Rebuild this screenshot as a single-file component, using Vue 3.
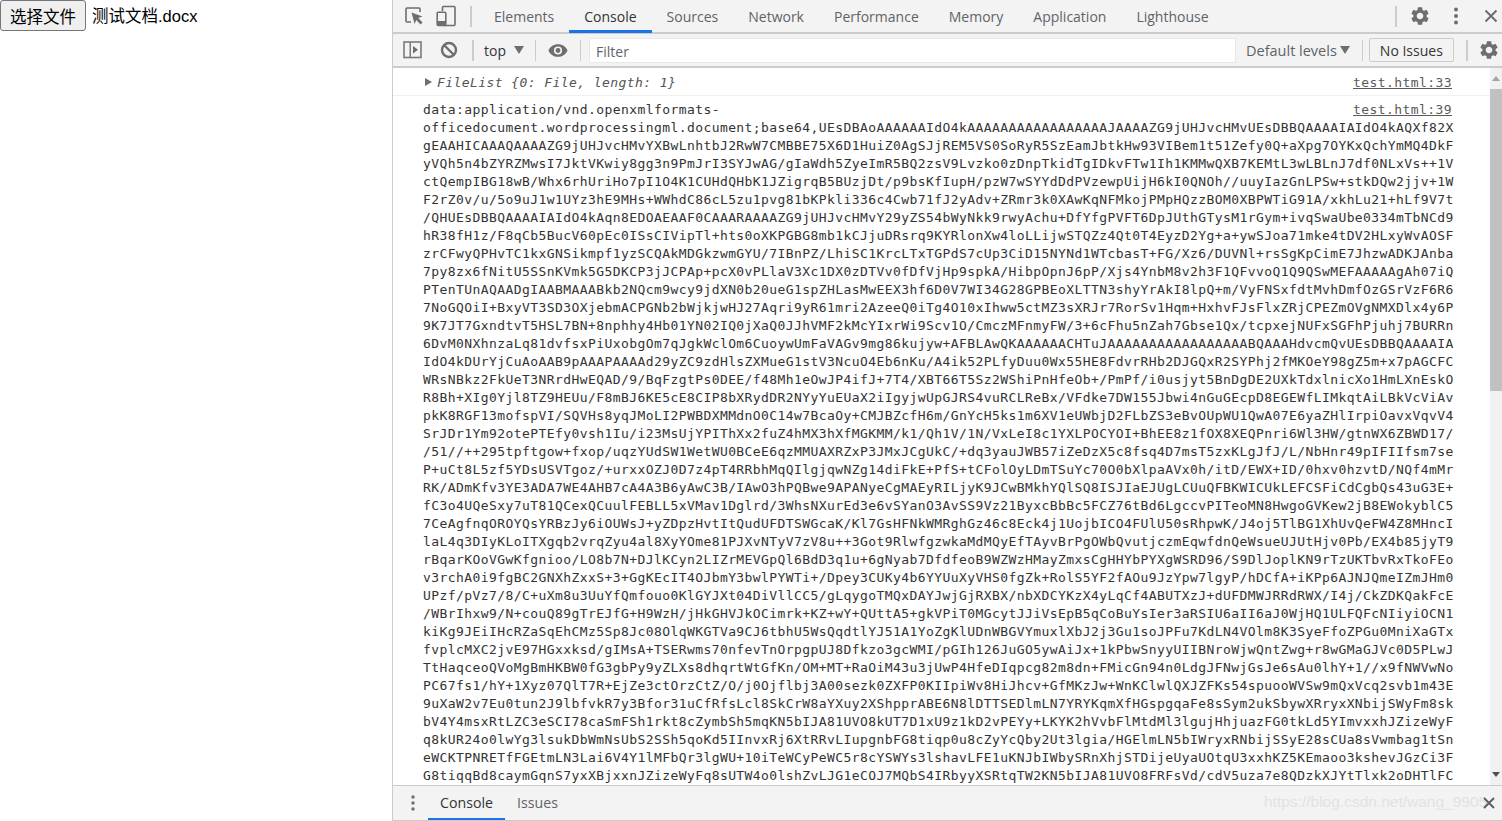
<script setup>
const gear = 'M19.14 12.94c.04-.3.06-.61.06-.94 0-.32-.02-.64-.07-.94l2.03-1.58c.18-.14.23-.41.12-.61l-1.92-3.32c-.12-.22-.37-.29-.59-.22l-2.39.96c-.5-.38-1.03-.7-1.62-.94l-.36-2.54c-.04-.24-.24-.41-.48-.41h-3.84c-.24 0-.43.17-.47.41l-.36 2.54c-.59.24-1.13.57-1.62.94l-2.39-.96c-.22-.08-.47 0-.59.22L2.74 8.87c-.12.21-.08.47.12.61l2.03 1.58c-.05.3-.09.63-.09.94s.02.64.07.94l-2.03 1.58c-.18.14-.23.41-.12.61l1.92 3.32c.12.22.37.29.59.22l2.39-.96c.5.38 1.03.7 1.62.94l.36 2.54c.05.24.24.41.48.41h3.84c.24 0 .44-.17.47-.41l.36-2.54c.59-.24 1.13-.56 1.62-.94l2.39.96c.22.08.47 0 .59-.22l1.92-3.32c.12-.22.07-.47-.12-.61l-2.01-1.58zM12 15.6c-1.98 0-3.6-1.62-3.6-3.6s1.62-3.6 3.6-3.6 3.6 1.62 3.6 3.6-1.62 3.6-3.6 3.6z'
const tabs = ['Elements', 'Console', 'Sources', 'Network', 'Performance', 'Memory', 'Application', 'Lighthouse']
const lines = [
  'data:application/vnd.openxmlformats-',
  'officedocument.wordprocessingml.document;base64,UEsDBAoAAAAAAIdO4kAAAAAAAAAAAAAAAAAJAAAAZG9jUHJvcHMvUEsDBBQAAAAIAIdO4kAQXf82X',
  'gEAAHICAAAQAAAAZG9jUHJvcHMvYXBwLnhtbJ2RwW7CMBBE75X6D1HuiZ0AgSJjREM5VS0SoRyR5SzEamJbtkHw93VIBem1t51Zefy0Q+aXpg7OYKxQchYmMQ4DkF',
  'yVQh5n4bZYRZMwsI7JktVKwiy8gg3n9PmJrI3SYJwAG/gIaWdh5ZyeImR5BQ2zsV9Lvzko0zDnpTkidTgIDkvFTw1Ih1KMMwQXB7KEMtL3wLBLnJ7df0NLxVs++1V',
  'ctQempIBG18wB/Whx6rhUriHo7pI1O4K1CUHdQHbK1JZigrqB5BUzjDt/p9bsKfIupH/pzW7wSYYdDdPVzewpUijH6kI0QNOh//uuyIazGnLPSw+stkDQw2jjv+1W',
  'F2rZ0v/u/5o9uJ1w1UYz3hE9MHs+WWhdC86cL5zu1pvg81bKPkli336c4Cwb71fJ2yAdv+ZRmr3k0XAwKqNFMkojPMpHQzzBOM0XBPWTiG91A/xkhLu21+hLf9V7t',
  '/QHUEsDBBQAAAAIAIdO4kAqn8EDOAEAAF0CAAARAAAAZG9jUHJvcHMvY29yZS54bWyNkk9rwyAchu+DfYfgPVFT6DpJUthGTysM1rGym+ivqSwaUbe0334mTbNCd9',
  'hR38fH1z/F8qCb5BucV60pEc0ISsCIVipTl+hts0oXKPGBG8mb1kCJjuDRsrq9KYRlonXw4loLLijwSTQZz4Qt0T4EyzD2Yg+a+ywSJoa71mke4tDV2HLxyWvAOSF',
  'zrCFwyQPHvTC1kxGNSikmpf1yzSCQAkMDGkzwmGYU/7IBnPZ/LhiSC1KrcLTxTGPdS7cUp3CiD15NYNd1WTcbasT+FG/Xz6/DUVNl+rsSgKpCimE7JhzwADKJAnba',
  '7py8zx6fNitU5SSnKVmk5G5DKCP3jJCPAp+pcX0vPLlaV3Xc1DX0zDTVv0fDfVjHp9spkA/HibpOpnJ6pP/Xjs4YnbM8v2h3F1QFvvoQ1Q9QSwMEFAAAAAgAh07iQ',
  'PTenTUnAQAADgIAABMAAABkb2NQcm9wcy9jdXN0b20ueG1spZHLasMwEEX3hf6D0V7WI34G28GPBEoXLTTN3shyYrAkI8lpQ+m/VyFNSxfdtMvhDmfOzGSrVzF6R6',
  '7NoGQOiI+BxyVT3SD3OXjebmACPGNb2bWjkjwHJ27Aqri9yR61mri2AzeeQ0iTg4O10xIhww5ctMZ3sXRJr7RorSv1Hqm+HxhvFJsFlxZRjCPEZmOVgNMXDlx4y6P',
  '9K7JT7GxndtvT5HSL7BN+8nphhy4Hb01YN02IQ0jXaQ0JJhVMF2kMcYIxrWi9Scv1O/CmczMFnmyFW/3+6cFhu5nZah7Gbse1Qx/tcpxejNUFxSGFhPjuhj7BURRn',
  '6DvM0NXhnzaLq81dvfsxPiUxobgOm7qJgkWclOm6CuoywUmFaVAGv9mg86kujyw+AFBLAwQKAAAAAACHTuJAAAAAAAAAAAAAAAAABQAAAHdvcmQvUEsDBBQAAAAIA',
  'IdO4kDUrYjCuAoAAB9pAAAPAAAAd29yZC9zdHlsZXMueG1stV3NcuO4Eb6nKu/A4ik52PLfyDuu0Wx55HE8FdvrRHb2DJGQxR2SYPhj2fMKOeY98gZ5m+x7pAGCFC',
  'WRsNBkz2FkUeT3NRrdHwEQAD/9/BqFzgtPs0DEE/f48Mh1eOwJP4ifJ+7T4/XBT66T5Sz2WShiPnHfeOb+/PmPf/i0usjyt5BnDgDE2UXkTdxlnicXo1HmLXnEskO',
  'R8Bh+XIg0Yjl8TZ9HEUu/F8mBJ6KE5cE8CIP8bXRydDR2NYyYuEUaX2iIgyjwUpGJRS4vuRCLReBx/VFdke7DW155Jbwi4nGuGEcpD8EGEWfLIMkqtAiLBkVcViAv',
  'pkK8RGF13mofspVI/SQVHs8yqJMoLI2PWBDXMMdnO0C14w7BcaOy+CMJBZcfH6m/GnYcH5ks1m6XV1eUWbjD2FLbZS3eBvOUpWU1QwA07E6yaZHlIrpiOavxVqvV4',
  'SrJDr1Ym92otePTEfy0vsh1Iu/i23MsUjYPIThXx2fuZ4hMX3hXfMGKMM/k1/Qh1V/1N/VxLeI8c1YXLPOCYOI+BhEE8z1fOX8XEQPnri6Wl3HW/gtnWX6ZBWD17/',
  '/51//++295tpftgow+fxop/uqzYUdSW1WetWU0BCeE6qzMMUAXRZxP3JMxJCgUkC/+dq3yauJWB57iZeDzX5c8fsq4D7msT5zxKLgJfJ/L/NbHnr49pIFIIfsm7se',
  'P+uCt8L5zf5YDsUSVTgoz/+urxxOZJ0D7z4pT4RRbhMqQIlgjqwNZg14diFkE+PfS+tCFolOyLDmTSuYc70O0bXlpaAVx0h/itD/EWX+ID/0hxv0hzvtD/NQf4mMr',
  'RK/ADmKfv3YE3ADA7WE4AHB7cA4A3B6yAwC3B/IAwO3hPQBwe9APANyeCgMAEyRILjyK9JCwBMkhYQlSQ8ISJIaEJUgLCUuQFBKWICUkLEFCSFiCdCgbQs43uG3E+',
  'fC3o4UQeSxy7uT81QCexQCuulFEBLL5xVMav1Dglrd/3WhsNXurEd3e6vSYanO3AvSS9Vz21ByxcBbBc5FCZ76tBd6LgccvPITeoMN8HwgoGVKew2jB8EWokyblC5',
  '7CeAgfnqOROYQsYRBzJy6iOUWsJ+yZDpzHvtItQudUFDTSWGcaK/Kl7GsHFNkWMRghGz46c8Eck4j1UojbICO4FUlU50sRhpwK/J4oj5TlBG1XhUvQeFW4Z8MHncI',
  'laL4q3DIyKLoITXgqb2vrqZyu4al8XyYOme81PJXvNTyV7zV8u++3Got9RlwfgzwkaMdMQyEfTAyvBrPgOWbQvutjczmEqwfdnQeWsueUJUtHjv0Pb/EX4b85jyT9',
  'rBqarKOoVGwKfgnioo/LO8b7N+DJlKCyn2LIZrMEVGpQl6BdD3q1u+6gNyab7DfdfeoB9WZWzHMayZmxsCgHHYbPYXgWSRD96/S9DlJoplKN9rTzUKTbvRxTkoFEo',
  'v3rchA0i9fgBC2GNXhZxxS+3+GgKEcIT4OJbmY3bwlPYWTi+/Dpey3CUKy4b6YYUuXyVHS0fgZk+RolS5YF2fAOu9JzYpw7lgyP/hDCfA+iKPp6AJNJQmeIZmJHm0',
  'UPzf/pVz7/8/C+uXm8u3UuYfQmfouo0KlGYJXt04DiVllCC5/gLqygoTMQxDAYJwjGjRXBX/nbXDCYKzX4yLqCf4ABUTXzJ+dUFDMWJRRdRWX/I4j/CkZDKQakFcE',
  '/WBrIhxw9/N+couQ89gTrEJfG+H9WzH/jHkGHVJkOCimrk+KZ+wY+QUttA5+gkVPiT0MGcytJJiVsEpB5qCoBuYsIer3aRSIU6aII6aJ0WjHQ1ULFQFcNIiyiOCN1',
  'kiKg9JEiIHcRZaSqEhCMz5Sp8Jc08OlqWKGTVa9CJ6tbhU5WsQqdtlYJ51A1YoZgKlUDnWBGVYmuxlXbJ2j3Gu1soJPFu7KdLN4VOlm8K3SyeFfoZPGu0MniXaGTx',
  'fvplcMXC2jvE97HGxxksd/gIMsA+TSERwms70nfevTnOrpgpUJ8Dfkzo3gcWMI/pGIh126JuGO5ywAiJx+1kPbwSnyyUIIBNroWjwQntZwg+r8wGMaGJVc0D5PLwJ',
  'TtHaqceoQVoMgBmHKBW0fG3gbPy9yZLXs8dhqrtWtGfKn/OM+MT+RaOiM43u3jUwP4HfeDIqpcg82m8dn+FMicGn94n0LdgJFNwjGsJe6sAu0lhY+1//x9fNWVwNo',
  'PC67fs1/hY+1Xyz07QlT7R+EjZe3ctOrzCtZ/O/j0Ojflbj3A00sezk0ZXFP0KIIpiWv8HiJhcv+GfMKzJw+WnKClwlQXJZFKs54spuooWVSw9mQxVcq2svb1m43E',
  '9uXaW2v7Eu0tun2J9lbfvkR7y3Bfor31uCfRfsLcl8SkCrW8aYXuy2XShpprABE6N8lDTTSEDlmLN7YRYKqmXfHGspgqaFe8sSym2ukSbywXRryxXNbijSWyFm8sk',
  'bV4Y4msxRtLZC3eSCI78caSmFSh1rkt8cZymbSh5mqKN5bIJA81UVO8kUT7D1xU9z1kD2vPEYy+LKYK2hVvbFlMtdMl3lgujHhjuazFG0tkLd5YImvxxhJZizeWyF',
  'q8kUR24o0lwYg3lsukDbWmNsUbS2SSh5qoKd5IInvxRj6XtRRvLIupgnbFG8tiqp0u8cZyYcQby2Ut3lgia/HGElmLN5bIWryxRNbijSSyE28sCUa8sVwmbag1tSn',
  'eWCKTPNRETfFGEtmLN3Lai6V4Y1lMFbQr3lgWU+10iTeWCyPeWC5r8cYSWYs3lshavLFE1uKNJbIWbySRnXhjSTDijeUyaUOtqU3xxhKZ5KEmaoo3kshevJGzCi3F',
  'G8tiqqBd8caymGqnS7yxXBjxxnJZizeWyFq8sUTW4o0lshZvLJG1eCOJ7MQbS4IRbyyXSRtqTW2KN5bIJA81UVO8FRFsVd/cdV5uza7e8QDzkXJYtTlxk2oDHTlFC'
]
</script>

<template>
  <div class="page">
    <div class="site">
      <button class="pick">选择文件</button>
      <span class="fname">测试文档.docx</span>
    </div>
    <div class="devtools">
      <div class="bar top">
        <svg class="ic first" width="22" height="22" viewBox="0 0 22 22">
          <path d="M8 17H4a1 1 0 0 1-1-1V4a1 1 0 0 1 1-1h12a1 1 0 0 1 1 1v3" fill="none" stroke="#6e6e6e" stroke-width="1.6"/>
          <path d="M8.5 7.5l11 4-4.2 1.6 4.2 4.3-2 2-4.2-4.3L11.600 19z" fill="#6e6e6e"/>
        </svg>
        <svg class="ic" width="22" height="22" viewBox="0 0 22 22">
          <path d="M7.500 6V2.500a1 1 0 0 1 1-1H19a1 1 0 0 1 1 1V19.500a1 1 0 0 1-1 1H9" fill="none" stroke="#6e6e6e" stroke-width="1.600"/>
          <rect x="2.200" y="7.200" width="8.600" height="13.300" rx="1" fill="none" stroke="#6e6e6e" stroke-width="1.600"/>
          <rect x="3" y="16" width="7" height="4" fill="#6e6e6e"/>
        </svg>
        <span class="sep tall"></span>
        <span v-for="(t, i) in tabs" :key="t" class="tab" :class="{ on: i === 1 }">{{ t }}</span>
        <span class="grow"></span>
        <span class="sep tall"></span>
        <svg class="gear g1" width="22" height="22" viewBox="0 0 24 24"><path :d="gear" fill="#6e6e6e"/></svg>
        <svg class="kebab" width="4" height="18" viewBox="0 0 4 18"><circle cx="2" cy="2.500" r="2" fill="#6e6e6e"/><circle cx="2" cy="9" r="2" fill="#6e6e6e"/><circle cx="2" cy="15.500" r="2" fill="#6e6e6e"/></svg>
        <svg class="close" width="14" height="14" viewBox="0 0 14 14"><path d="M1.500 1.500l11 11M12.500 1.500l-11 11" stroke="#6e6e6e" stroke-width="2"/></svg>
      </div>
      <div class="bar second">
        <svg class="dock" width="20" height="18" viewBox="0 0 20 18">
          <rect x="1" y="1" width="17" height="15.500" fill="none" stroke="#7a7a7a" stroke-width="1.600"/>
          <rect x="6.500" y="1" width="1.500" height="15.500" fill="#7a7a7a"/>
          <path d="M10 5l5 3.800-5 3.800z" fill="#6e6e6e"/>
        </svg>
        <svg class="block" width="18" height="18" viewBox="0 0 18 18">
          <circle cx="9" cy="9" r="7" fill="none" stroke="#6e6e6e" stroke-width="2.400"/>
          <path d="M4 4l10 10" stroke="#6e6e6e" stroke-width="2.400"/>
        </svg>
        <span class="sep tall s1"></span>
        <span class="ctx">top</span>
        <span class="tri t1"></span>
        <span class="sep mid s2"></span>
        <svg class="eye" width="20" height="13" viewBox="0 0 22 14">
          <path d="M11 0C6 0 2 3 0.500 7 2 11 6 14 11 14s9-3 10.500-7C20 3 16 0 11 0zm0 11.500a4.500 4.500 0 1 1 0-9 4.500 4.500 0 0 1 0 9zM11 4.300a2.700 2.700 0 1 0 0 5.400 2.700 2.700 0 0 0 0-5.400z" fill="#6e6e6e"/>
        </svg>
        <span class="sep mid s3"></span>
        <div class="filter">Filter</div>
        <span class="levels">Default levels</span>
        <span class="tri t2"></span>
        <span class="sep mid s4"></span>
        <span class="issues">No Issues</span>
        <span class="sep tall s5"></span>
        <svg class="gear g2" width="22" height="22" viewBox="0 0 24 24"><path :d="gear" fill="#6e6e6e"/></svg>
      </div>
      <div class="body">
        <div class="log">
          <div class="row first-row">
            <span class="caret"></span>
            <span class="obj">FileList {0: File, length: 1}</span>
            <span class="src">test.html:33</span>
          </div>
          <div class="row data-row">
            <span class="src src2">test.html:39</span>
            <div v-for="(l, i) in lines" :key="i" class="ln">{{ l }}</div>
          </div>
        </div>
        <div class="scroll">
          <span class="arrow up"></span>
          <span class="thumb"></span>
          <span class="grow"></span>
          <span class="arrow down"></span>
        </div>
      </div>
      <div class="drawer">
        <svg class="dkebab" width="4" height="16" viewBox="0 0 4 16"><circle cx="2" cy="2" r="1.700" fill="#6e6e6e"/><circle cx="2" cy="8" r="1.700" fill="#6e6e6e"/><circle cx="2" cy="14" r="1.700" fill="#6e6e6e"/></svg>
        <span class="dtab on">Console</span>
        <span class="dtab">Issues</span>
        <span class="grow"></span>
        <span class="mark">https://blog.csdn.net/wang_9905</span>
        <svg class="dclose" width="12" height="12" viewBox="0 0 12 12"><path d="M1 1l10 10M11 1L1 11" stroke="#5f5f5f" stroke-width="2"/></svg>
      </div>
    </div>
  </div>
</template>

<style scoped>
.page { display: flex; width: 1502px; height: 821px; background: #fff; overflow: hidden; font-family: "Open Sans", "Noto Sans", sans-serif; }
.site { width: 392px; flex: none; display: flex; align-items: flex-start; font-family: "Liberation Sans", "Noto Sans CJK SC", sans-serif; font-size: 16.500px; color: #000; }
.pick { width: 86px; height: 31px; margin: 0; padding: 0; background: #efefef; border: 1px solid #767676; border-radius: 3px; font: inherit; color: #000; }
.fname { margin-left: 6px; line-height: 32px; }
.devtools { flex: 1; min-width: 0; display: flex; flex-direction: column; border-left: 1px solid #ccc; height: 820px; border-bottom: 1px solid #ccc; box-sizing: content-box; position: relative; }
.bar { display: flex; align-items: center; background: #f3f3f3; border-bottom: 2px solid #ccc; flex: none; }
.top { height: 32px; }
.second { height: 32px; }
.ic { flex: none; }
.first { margin-left: 10px; margin-right: 10px; }
.sep { flex: none; width: 2px; background: #ccc; }
.tall { height: 21px; }
.mid { height: 21px; width: 1px; }
.top .sep:first-of-type { margin-left: 13px; }
.tab { position: relative; height: 32px; line-height: 34px; padding: 0 15px; font-size: 14px; color: #5f6368; flex: none; }
.tab.on { color: #333; }
.tab.on::after { content: ""; position: absolute; left: 0; right: 0; bottom: -1px; height: 3px; background: #1a73e8; }
.top .sep:first-of-type + .tab { margin-left: 7px; }
.grow { flex: 1; }
.g1 { margin-left: 12px; }
.kebab { margin-left: 23px; }
.close { margin-left: 26px; margin-right: 4px; }
.dock { margin-left: 10px; }
.block { margin-left: 17px; }
.s1 { margin-left: 14px; }
.ctx { margin-left: 10px; font-size: 14px; color: #333; }
.tri { width: 0; height: 0; border-left: 5px solid transparent; border-right: 5px solid transparent; border-top: 8px solid #6e6e6e; flex: none; }
.t1 { margin-left: 8px; }
.s2 { margin-left: 11px; }
.eye { margin-left: 12px; flex: none; }
.s3 { margin-left: 12px; }
.filter { margin-left: 8px; width: 647px; height: 25px; line-height: 25px; background: #fff; border: 1px solid #e8e8e8; padding-left: 6px; box-sizing: border-box; font-size: 14px; color: #5f6368; flex: none; }
.levels { margin-left: 10px; font-size: 14.500px; color: #5f6368; flex: none; }
.t2 { margin-left: 3px; }
.s4 { margin-left: 12px; }
.issues { margin-left: 6px; width: 85px; height: 24px; line-height: 23px; text-align: center; box-sizing: border-box; border: 1px solid #ccc; border-radius: 2px; font-size: 14px; color: #333; flex: none; }
.s5 { margin-left: 12px; }
.g2 { margin-left: 10px; }
.body { flex: 1; min-height: 0; display: flex; overflow: hidden; }
.log { flex: 1; min-width: 0; overflow: hidden; background: #fff; }
.row { position: relative; padding-right: 38px; }
.first-row { display: flex; align-items: center; height: 28px; border-bottom: 1px solid #f0f0f0; font-family: "DejaVu Sans Mono", monospace; font-size: 13px; letter-spacing: 0.420px; padding-top: 1px; box-sizing: border-box; }
.caret { margin-left: 32px; width: 0; height: 0; border-top: 4.500px solid transparent; border-bottom: 4.500px solid transparent; border-left: 7px solid #6e6e6e; flex: none; }
.obj { margin-left: 5px; font-style: italic; color: #555; }
.src { margin-left: auto; color: #5a5a5a; text-decoration: underline; font-family: "DejaVu Sans Mono", monospace; font-size: 13px; letter-spacing: 0.420px; }
.data-row { padding-top: 5px; padding-left: 30px; }
.src2 { float: right; line-height: 18px; }
.ln { font-family: "DejaVu Sans Mono", monospace; font-size: 13px; letter-spacing: 0.420px; line-height: 18px; height: 18px; white-space: pre; color: #333; }
.scroll { width: 12px; flex: none; background: #f1f1f1; display: flex; flex-direction: column; align-items: center; }
.arrow { width: 0; height: 0; border-left: 4px solid transparent; border-right: 4px solid transparent; flex: none; }
.up { margin-top: 8px; border-bottom: 5px solid #a3a3a3; }
.down { margin-bottom: 8px; border-top: 5px solid #505050; }
.thumb { width: 12px; height: 302px; background: #c1c1c1; margin-top: 8px; flex: none; }
.drawer { position: relative; height: 34px; flex: none; display: flex; align-items: center; background: #f3f3f3; border-top: 1px solid #ccc; }
.dkebab { margin-left: 18px; flex: none; }
.dtab { position: relative; padding: 0 12px; line-height: 34px; font-size: 14.200px; color: #5f6368; flex: none; }
.dtab.on { margin-left: 13px; padding: 0 12px; color: #333; }
.dtab.on::after { content: ""; position: absolute; left: 0; right: 0; bottom: 0; height: 2px; background: #1a73e8; }
.dclose { margin-right: 7px; flex: none; position: relative; }
.mark { position: absolute; left: 871px; top: 7px; font-family: "Liberation Sans", sans-serif; font-size: 15.500px; color: #e2e2e2; white-space: nowrap; }
</style>

<style>
html, body { margin: 0; background: #fff; }
</style>
